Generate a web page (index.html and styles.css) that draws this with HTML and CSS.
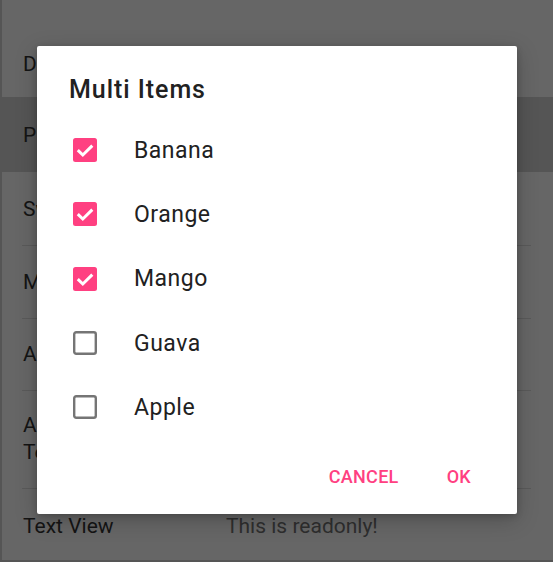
FILE: index.html
```html
<!DOCTYPE html>
<html>
<head>
<meta charset="utf-8">
<link rel="stylesheet" href="styles.css">
</head>
<body>
<div class="page">
  <div class="row r1"><span class="label">Dialog</span></div>
  <div class="row r2 hl"><span class="label">Picker</span></div>
  <div class="row r3"><span class="label">Switch</span></div>
  <div class="row r4 sep"><span class="label">Multi</span></div>
  <div class="row r5 sep"><span class="label">Action</span></div>
  <div class="row r6 sep"><span class="label two">Auto<br>Text</span></div>
  <div class="row r7 sep"><span class="label tv">Text View</span><span class="value">This is readonly!</span></div>
</div>
<div class="dialog">
  <div class="title">Multi Items</div>
  <div class="items">
    <div class="item"><span class="cb on"><svg viewBox="0 0 24 24" width="24" height="24"><rect x="0" y="0" width="24" height="24" rx="2.5" fill="#ff4081"/><path d="M4.8 12.2 L9.8 17 L19.3 7.6" fill="none" stroke="#fff" stroke-width="3"/></svg></span><span class="txt">Banana</span></div>
    <div class="item"><span class="cb on"><svg viewBox="0 0 24 24" width="24" height="24"><rect x="0" y="0" width="24" height="24" rx="2.5" fill="#ff4081"/><path d="M4.8 12.2 L9.8 17 L19.3 7.6" fill="none" stroke="#fff" stroke-width="3"/></svg></span><span class="txt">Orange</span></div>
    <div class="item"><span class="cb on"><svg viewBox="0 0 24 24" width="24" height="24"><rect x="0" y="0" width="24" height="24" rx="2.5" fill="#ff4081"/><path d="M4.8 12.2 L9.8 17 L19.3 7.6" fill="none" stroke="#fff" stroke-width="3"/></svg></span><span class="txt">Mango</span></div>
    <div class="item"><span class="cb"><svg viewBox="0 0 24 24" width="24" height="24"><rect x="1.2" y="1.2" width="21.6" height="21.6" rx="2" fill="none" stroke="#757575" stroke-width="2.4"/></svg></span><span class="txt">Guava</span></div>
    <div class="item"><span class="cb"><svg viewBox="0 0 24 24" width="24" height="24"><rect x="1.2" y="1.2" width="21.6" height="21.6" rx="2" fill="none" stroke="#757575" stroke-width="2.4"/></svg></span><span class="txt">Apple</span></div>
  </div>
  <div class="actions">
    <span class="btn">CANCEL</span>
    <span class="btn">OK</span>
  </div>
</div>
</body>
</html>
```
FILE: styles.css
```css
html, body {
  margin: 0;
  padding: 0;
}
body {
  width: 553px;
  height: 562px;
  overflow: hidden;
  background: #666666;
  font-family: Roboto, "Liberation Sans", sans-serif;
  position: relative;
}
.page {
  display: flex;
  flex-direction: column;
  height: 562px;
  box-shadow: inset 2px -2px 0 #555555;
}
.row {
  display: flex;
  align-items: center;
  padding-left: 23px;
  position: relative;
  font-size: 21px;
  color: #141414;
}
.row.sep::before {
  content: "";
  position: absolute;
  left: 22px;
  right: 22px;
  top: 0;
  height: 1px;
  background: #5a5a5a;
}
.r1 { height: 97px; padding-top: 30px; box-sizing: border-box; }
.r2 { height: 75px; }
.r3 { height: 73px; }
.r4 { height: 73px; }
.r5 { height: 72px; }
.r6 { height: 98px; }
.r7 { height: 74px; align-items: flex-start; padding-top: 26px; box-sizing: border-box; }
.hl { background: #555555; }
.two { line-height: 27px; }
.tv { width: 203px; }
.value { color: #2e2e2e; }
.dialog {
  position: absolute;
  left: 37px;
  top: 46px;
  width: 480px;
  height: 468px;
  background: #ffffff;
  border-radius: 2px;
  box-shadow: 0 6px 22px rgba(0,0,0,0.22), 0 2px 6px rgba(0,0,0,0.18);
  box-sizing: border-box;
  padding-top: 28px;
  display: flex;
  flex-direction: column;
}
.title {
  padding-left: 32px;
  font-size: 25px;
  line-height: 32px;
  font-weight: 500;
  color: #212121;
  letter-spacing: 0.95px;
}
.items {
  margin-top: 12px;
  display: flex;
  flex-direction: column;
}
.item {
  height: 64.3px;
  display: flex;
  align-items: center;
  padding-left: 36px;
}
.cb {
  width: 24px;
  height: 24px;
  display: block;
}
.cb svg { display: block; }
.txt {
  margin-left: 37px;
  font-size: 23px;
  letter-spacing: 0.5px;
  color: #212121;
}
.actions {
  margin-top: 20px;
  display: flex;
  justify-content: flex-end;
  padding-right: 22px;
}
.btn {
  height: 36px;
  line-height: 36px;
  padding: 0 24px;
  font-size: 18px;
  font-weight: 500;
  color: #ff4081;
  letter-spacing: 0.3px;
}
```
